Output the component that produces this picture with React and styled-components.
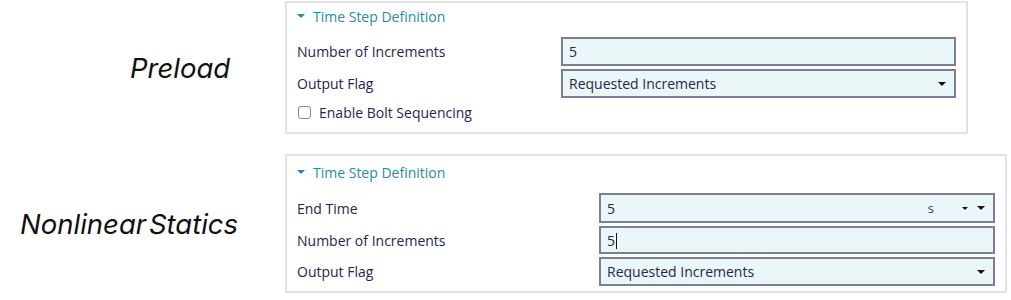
import styled, { createGlobalStyle } from "styled-components";

const GlobalStyle = createGlobalStyle`
  body {
    margin: 0;
    background: #ffffff;
    font-family: "Open Sans", "Noto Sans", sans-serif;
  }
`;

const Page = styled.div`
  display: flex;
  flex-direction: column;
  gap: 20px;
  padding-top: 1px;
  width: 1011px;
`;

const Row = styled.div`
  display: flex;
  align-items: center;
`;

const SideLabel = styled.div`
  width: 285px;
  box-sizing: border-box;
  padding-left: ${(p) => p.$indent}px;
  font-family: "Inter", "Liberation Sans", sans-serif;
  font-style: italic;
  font-size: 27.5px;
  color: #111;
  word-spacing: -5px;
`;

const Panel = styled.div`
  width: ${(p) => p.$width}px;
  box-sizing: border-box;
  border: 2px solid #e2e2e2;
  padding: 0 10px 0 10px;
  min-height: ${(p) => p.$height}px;
`;

const Header = styled.div`
  display: flex;
  align-items: center;
  gap: 8px;
  height: ${(p) => p.$h}px;
  margin-bottom: ${(p) => p.$mb}px;
  color: #1f8ea0;
  font-size: 14px;
`;

const Caret = styled.span`
  width: 0;
  height: 0;
  border-left: ${(p) => p.$size}px solid transparent;
  border-right: ${(p) => p.$size}px solid transparent;
  border-top: ${(p) => p.$size}px solid ${(p) => p.$color};
`;

const Fields = styled.div`
  display: grid;
  grid-template-columns: ${(p) => p.$labelWidth}px 1fr;
  row-gap: 3px;
  align-items: center;
`;

const Label = styled.div`
  font-size: 14px;
  color: #26264a;
`;

const Input = styled.div`
  display: flex;
  align-items: center;
  height: ${(p) => p.$h}px;
  box-sizing: border-box;
  border: 2px solid #7b7f94;
  background: #eaf6f8;
  padding: 0 8px 0 6px;
  font-size: 14px;
  color: #26264a;
`;

const Value = styled.span`
  flex: 1;
`;

const Cursor = styled.span`
  display: inline-block;
  width: 1px;
  height: 16px;
  background: #111;
  vertical-align: -3px;
  margin-left: 1px;
`;

const Unit = styled.span`
  margin-right: 28px;
  font-size: 13px;
  color: #3a3a55;
`;

const Arrows = styled.span`
  display: flex;
  align-items: center;
  gap: 9px;
`;

const CheckRow = styled.div`
  grid-column: 1 / span 2;
  display: flex;
  align-items: center;
  gap: 8px;
  height: 22px;
  padding-left: 1px;
`;

const Box = styled.span`
  width: 13px;
  height: 13px;
  box-sizing: border-box;
  border: 1.5px solid #8a8a8a;
  border-radius: 3px;
  background: #fff;
`;

const Panel1 = () => (
  <Panel $width={683} $height={133}>
    <Header $h={26} $mb={8}>
      <Caret $size={4} $color="#1f8ea0" />
      Time Step Definition
    </Header>
    <Fields $labelWidth={264}>
      <Label>Number of Increments</Label>
      <Input $h={29}>
        <Value>5</Value>
      </Input>
      <Label>Output Flag</Label>
      <Input $h={29}>
        <Value>Requested Increments</Value>
        <Caret $size={4} $color="#111" />
      </Input>
      <CheckRow>
        <Box />
        <Label>Enable Bolt Sequencing</Label>
      </CheckRow>
    </Fields>
  </Panel>
);

const Panel2 = () => (
  <Panel $width={722} $height={139}>
    <Header $h={32} $mb={5}>
      <Caret $size={4} $color="#1f8ea0" />
      Time Step Definition
    </Header>
    <Fields $labelWidth={302}>
      <Label>End Time</Label>
      <Input $h={30}>
        <Value>5</Value>
        <Unit>s</Unit>
        <Arrows>
          <Caret $size={3} $color="#111" />
          <Caret $size={4} $color="#111" />
        </Arrows>
      </Input>
      <Label>Number of Increments</Label>
      <Input $h={28}>
        <Value>
          5<Cursor />
        </Value>
      </Input>
      <Label>Output Flag</Label>
      <Input $h={29}>
        <Value>Requested Increments</Value>
        <Caret $size={4} $color="#111" />
      </Input>
    </Fields>
  </Panel>
);

export default function App() {
  return (
    <>
      <GlobalStyle />
      <Page>
        <Row>
          <SideLabel $indent={130}>Preload</SideLabel>
          <Panel1 />
        </Row>
        <Row>
          <SideLabel $indent={20}>Nonlinear Statics</SideLabel>
          <Panel2 />
        </Row>
      </Page>
    </>
  );
}
